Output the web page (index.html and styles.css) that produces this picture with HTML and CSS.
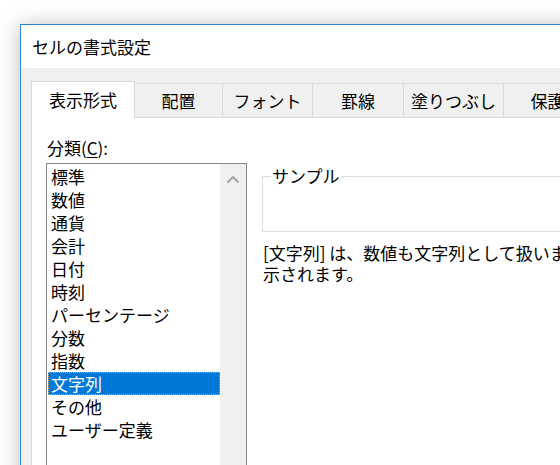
FILE: index.html
```html
<!DOCTYPE html>
<html lang="ja">
<head>
<meta charset="utf-8">
<title>セルの書式設定</title>
<link rel="stylesheet" href="styles.css">
</head>
<body>
<div class="window">
  <div class="titlebar">セルの書式設定</div>
  <div class="body">
    <div class="tabs">
      <div class="tab active w1">表示形式</div>
      <div class="tab w2">配置</div>
      <div class="tab w3">フォント</div>
      <div class="tab w4">罫線</div>
      <div class="tab w5">塗りつぶし</div>
      <div class="tab w6">保護</div>
    </div>
    <div class="panel">
      <div class="left">
        <div class="label">分類(<u>C</u>):</div>
        <div class="listbox">
          <ul class="items">
            <li>標準</li>
            <li>数値</li>
            <li>通貨</li>
            <li>会計</li>
            <li>日付</li>
            <li>時刻</li>
            <li>パーセンテージ</li>
            <li>分数</li>
            <li>指数</li>
            <li class="selected">文字列</li>
            <li>その他</li>
            <li>ユーザー定義</li>
          </ul>
          <div class="scrollbar">
            <svg class="chev" width="14" height="9" viewBox="0 0 14 9"><polyline points="1.5,7.5 7,2 12.5,7.5" fill="none" stroke="#a6a6a6" stroke-width="2.2"/></svg>
          </div>
        </div>
      </div>
      <div class="right">
        <fieldset class="sample">
          <legend>サンプル</legend>
          <div class="sample-body"></div>
        </fieldset>
        <p class="desc">[文字列] は、数値も文字列として扱います。入力したとおりにセルに表<br>示されます。</p>
      </div>
    </div>
  </div>
</div>
</body>
</html>
```

FILE: styles.css
```css
* { box-sizing: border-box; }
html, body {
  margin: 0;
  padding: 0;
  width: 560px;
  height: 465px;
  overflow: hidden;
  background: #ffffff;
}
body {
  font-family: "Noto Sans CJK JP", "Noto Sans", sans-serif;
  font-size: 17px;
  color: #000;
  padding: 24px 0 0 20px;
}
.window {
  width: 640px;
  height: 520px;
  border: 1px solid #2b88d8;
  background: #ffffff;
  box-shadow: 0 2px 20px rgba(0, 0, 0, 0.28);
  display: flex;
  flex-direction: column;
}
.titlebar {
  height: 43px;
  padding: 1px 0 0 11px;
  display: flex;
  align-items: center;
  background: #fff;
  line-height: 20px;
}
.body {
  flex: 1;
  background: #f0f0f0;
  padding: 13px 0 0 10px;
  display: flex;
  flex-direction: column;
}
.tabs {
  display: flex;
  align-items: flex-end;
  height: 37px;
  margin-bottom: -1px;
  position: relative;
  z-index: 1;
}
.tab {
  height: 35px;
  border: 1px solid #d9d9d9;
  border-left: none;
  background: #f0f0f0;
  display: flex;
  align-items: center;
  justify-content: center;
  line-height: 20px;
  padding-top: 1px;
  white-space: nowrap;
}
.tab.active {
  height: 37px;
  border-left: 1px solid #d9d9d9;
  border-bottom: none;
  background: #ffffff;
  padding-top: 0;
}
.w1 { width: 104px; }
.w2 { width: 88px; }
.w3 { width: 90px; }
.w4 { width: 91px; }
.w5 { width: 100px; }
.w6 { width: 88px; }
.panel {
  flex: 1;
  background: #ffffff;
  border-top: 1px solid #d9d9d9;
  border-left: 1px solid #d9d9d9;
  padding: 18px 0 0 14px;
  display: flex;
  align-items: flex-start;
}
.left {
  width: 201px;
  flex: none;
}
.label {
  line-height: 23px;
  height: 23px;
  padding-left: 1px;
  margin-bottom: 4px;
}
.label u {
  text-decoration-thickness: 1px;
  text-underline-offset: 2px;
}
.listbox {
  width: 201px;
  height: 330px;
  border: 1px solid #828790;
  display: flex;
  padding-left: 1px;
}
.items {
  list-style: none;
  margin: 0;
  padding: 1px 0 0 0;
  width: 172px;
  flex: none;
}
.items li {
  height: 23px;
  line-height: 23px;
  padding-left: 3px;
  white-space: nowrap;
}
.items li.selected {
  background: #0078d7;
  color: #ffffff;
  outline: 1px dotted #f0a040;
  outline-offset: -1px;
}
.scrollbar {
  width: 26px;
  flex: none;
  background: #f0f0f0;
  display: flex;
  justify-content: center;
  padding-top: 11px;
}
.chev { display: block; }
.right {
  margin-left: 15px;
  padding-top: 30px;
  width: 420px;
  flex: none;
}
.sample {
  margin: 0;
  padding: 0 0 0 8px;
  border: 1px solid #dcdcdc;
  min-width: 0;
}
.sample legend {
  padding: 0 1px;
  line-height: 20px;
  font-size: 17px;
}
.sample-body {
  height: 45px;
}
.desc {
  margin: 10px 0 0 1px;
  line-height: 21px;
  white-space: nowrap;
}
```
